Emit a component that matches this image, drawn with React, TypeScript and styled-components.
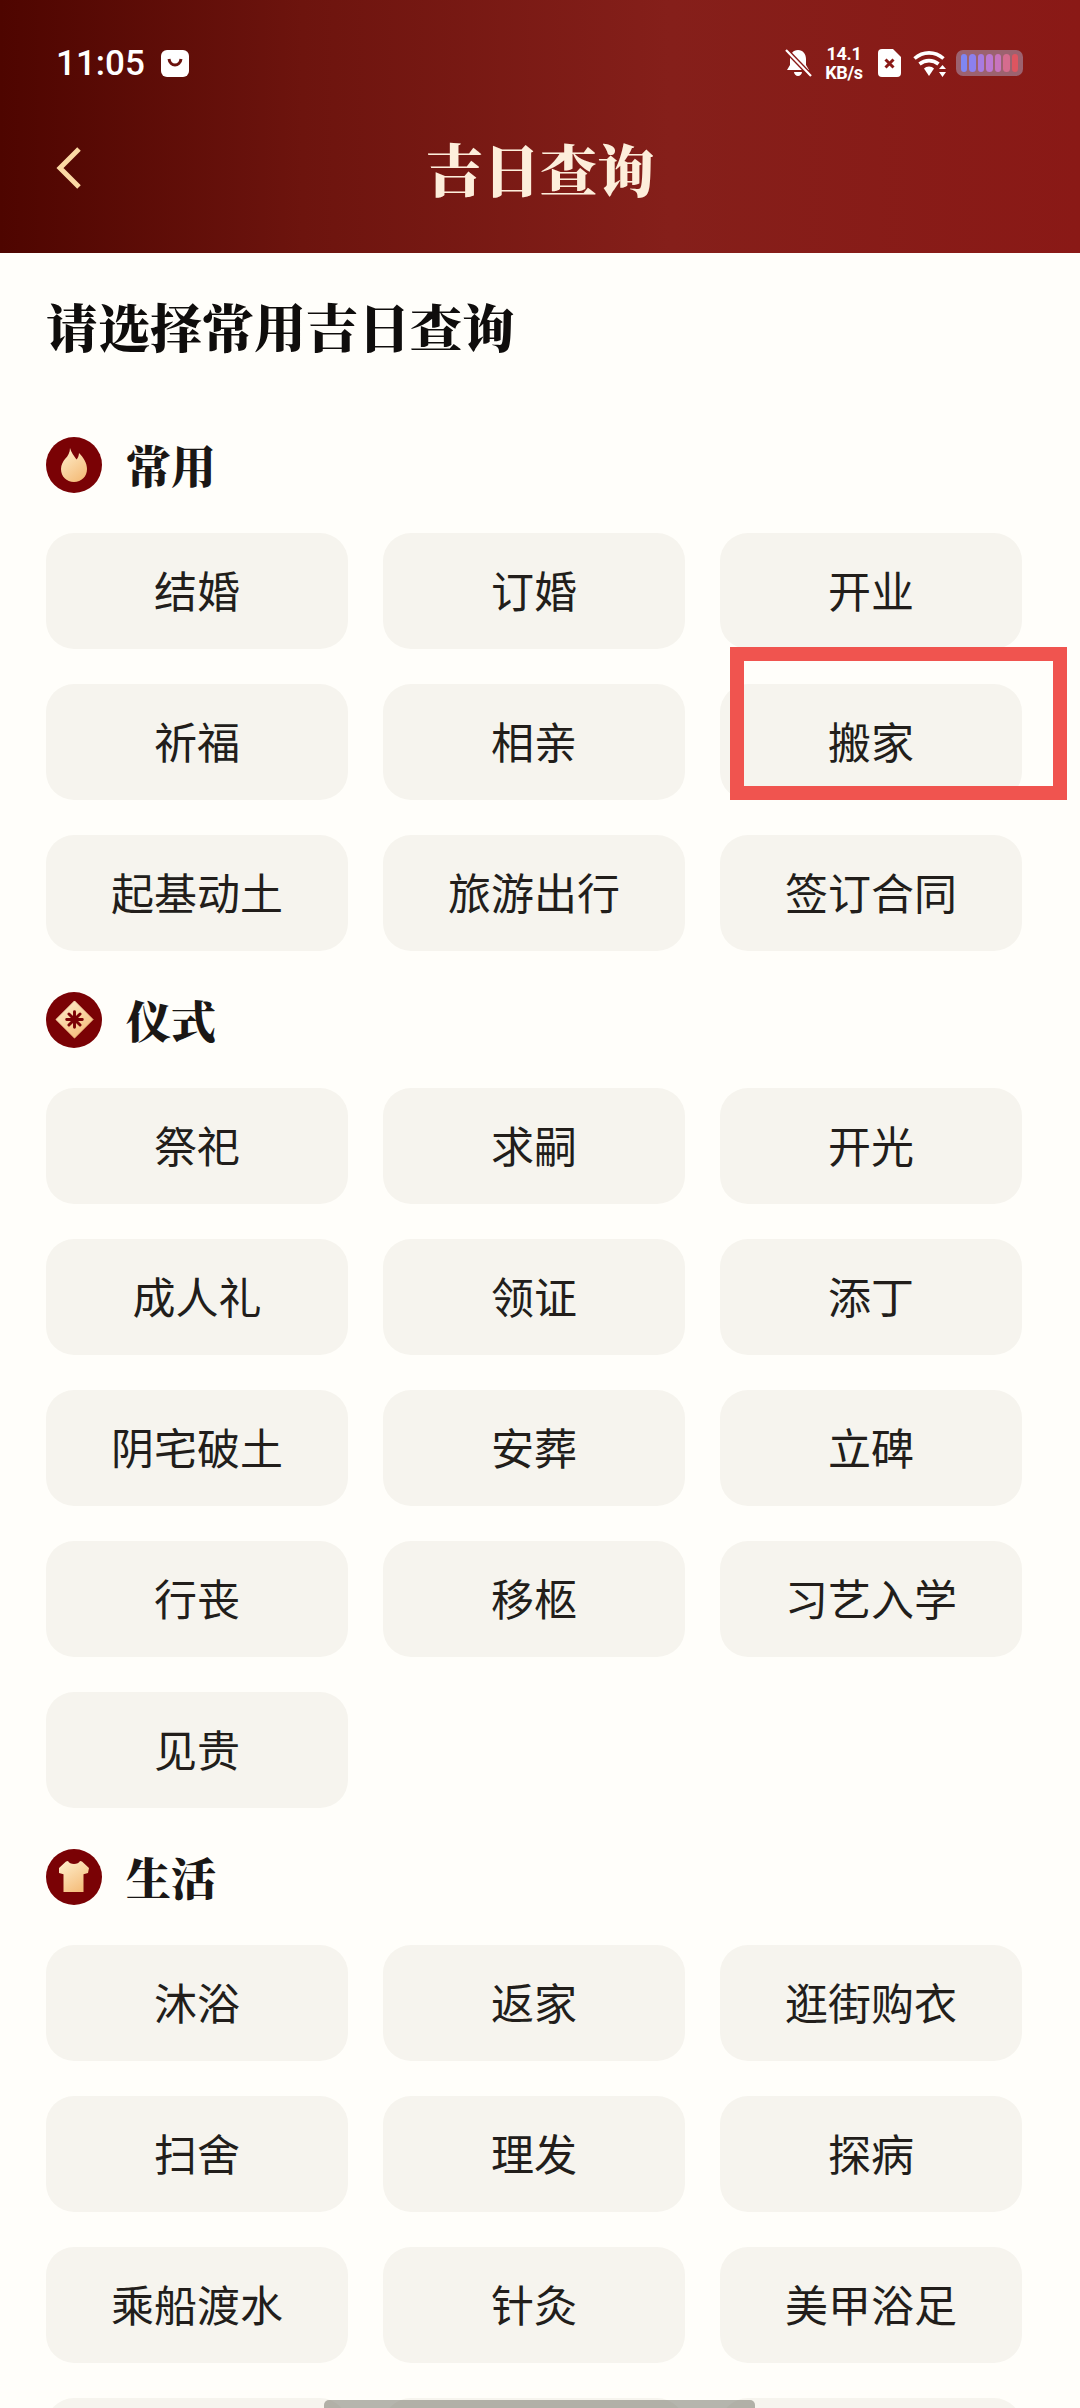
import * as React from "react";
import styled, { createGlobalStyle } from "styled-components";

const GlobalStyle = createGlobalStyle`
    html, body {
        margin: 0;
        padding: 0;
        background: #fffefa;
    }
    * {
        box-sizing: border-box;
    }
`;

const SERIF = `"Noto Serif CJK SC", "Noto Sans CJK SC", serif`;
const SANS = `"Noto Sans CJK SC", "Noto Sans", sans-serif`;

const Page = styled.div`
    position: relative;
    width: 1080px;
    height: 2408px;
    overflow: hidden;
    background: #fffefa;
    font-family: ${SANS};
`;

const Header = styled.header`
    height: 253px;
    background: linear-gradient(90deg, #4e0500 0%, #6d140e 28%, #851f1a 62%, #8a1916 100%);
`;

const StatusBar = styled.div`
    height: 126px;
    padding: 36px 57px 0 56px;
    display: flex;
    justify-content: space-between;
    align-items: flex-start;
    color: #ffffff;
`;

const StatusLeft = styled.div`
    display: flex;
    align-items: center;
    height: 54px;
    gap: 16px;
`;

const Time = styled.span`
    font-family: Roboto, sans-serif;
    font-weight: 500;
    font-size: 35px;
`;

const StatusRight = styled.div`
    display: flex;
    align-items: center;
    height: 54px;
`;

const Speed = styled.div`
    width: 42px;
    margin: 0 13px 0 11px;
    display: flex;
    flex-direction: column;
    align-items: center;
    font-family: Roboto, sans-serif;
    font-weight: 700;
    font-size: 18px;
    line-height: 19px;
    letter-spacing: -0.3px;
`;

const WifiSlot = styled.span`
    display: flex;
    margin-left: 12px;
`;

const Battery = styled.div`
    width: 67px;
    height: 26px;
    margin-left: 9px;
    padding: 4px 5px;
    border-radius: 7px;
    background: rgba(175, 170, 200, 0.5);
    display: flex;
    gap: 2px;
`;

const Cell = styled.span<{ $color: string }>`
    flex: 1;
    border-radius: 4px;
    background: ${(p) => p.$color};
`;

const NavBar = styled.div`
    position: relative;
    height: 84px;
    display: flex;
    align-items: center;
    justify-content: center;
`;

const BackIcon = styled.svg`
    position: absolute;
    left: 55px;
    top: 20px;
`;

const NavTitle = styled.h1`
    margin: -3px 0 0 0;
    font-family: ${SERIF};
    font-weight: 900;
    font-size: 57px;
    line-height: 84px;
    color: #fdeedb;
`;

const Content = styled.main`
    padding: 46px 58px 0 46px;
`;

const PageTitle = styled.h2`
    margin: 0 0 84px 0;
    font-family: ${SERIF};
    font-weight: 900;
    font-size: 52px;
    line-height: 54px;
    color: #0f0d0c;
`;

const Section = styled.section`
    margin-bottom: 41px;
`;

const SectionHead = styled.div`
    display: flex;
    align-items: center;
    gap: 24px;
    height: 55px;
    margin-bottom: 41px;
`;

const Badge = styled.span`
    width: 56px;
    height: 56px;
    border-radius: 50%;
    background: #7a0205;
    display: flex;
    align-items: center;
    justify-content: center;
`;

const SectionName = styled.h3`
    margin: 0;
    font-family: ${SERIF};
    font-weight: 900;
    font-size: 45px;
    line-height: 55px;
    color: #1a1715;
`;

const Grid = styled.div`
    display: grid;
    grid-template-columns: repeat(3, 302px);
    grid-auto-rows: 116px;
    gap: 35px;
`;

const Chip = styled.button`
    border: 0;
    padding: 0 0 4px 0;
    border-radius: 28px;
    background: #f6f4ee;
    font-family: ${SANS};
    font-weight: 400;
    font-size: 43px;
    color: #221e1b;
`;

const Highlight = styled.div`
    position: absolute;
    left: 730px;
    top: 647px;
    width: 337px;
    height: 153px;
    border: 14px solid #f0544f;
`;

const HomeBar = styled.div`
    position: absolute;
    left: 324px;
    bottom: 0;
    width: 431px;
    height: 8px;
    border-radius: 5px 5px 0 0;
    background: rgba(120, 120, 110, 0.55);
`;

function BadgeGradient({ id }: { id: string }) {
    return (
        <defs>
            <linearGradient id={id} x1="0" y1="0" x2="0.6" y2="1">
                <stop offset="0" stopColor="#fff0cf" />
                <stop offset="1" stopColor="#f5bf7e" />
            </linearGradient>
        </defs>
    );
}

const FlameIcon = () => (
    <svg width="26" height="34" viewBox="0 0 26 34">
        <BadgeGradient id="flame" />
        <path
            d="M9 0C10 4 13 8 15.500 11.500 17 10 17.800 8 18 5 22.500 9.500 26 15 26 21c0 7.500-5.500 13-13 13S0 28.500 0 21c0-4 2-7.500 4-10C7 8 9 4.500 9 0z"
            fill="url(#flame)"
        />
    </svg>
);

const DiamondIcon = () => (
    <svg width="39" height="39" viewBox="0 0 40 40">
        <BadgeGradient id="diamond" />
        <path d="M20 1 39 20 20 39 1 20z" fill="url(#diamond)" stroke="url(#diamond)" strokeLinejoin="round" />
        <g stroke="#7a0205" strokeWidth="3" strokeLinecap="round">
            <path d="M20 12v16M12 20h16M14.300 14.300l11.400 11.400M25.700 14.300 14.300 25.700" />
        </g>
    </svg>
);

const ShirtIcon = () => (
    <svg width="30" height="31" viewBox="0 0 30 31">
        <BadgeGradient id="shirt" />
        <path
            d="M9 0c1.500 4 10.500 4 12 0l2 .4 7 6.600-1 5-4.500 1.200V31H4.500V13.200L0 12 0 7 7 .4z"
            fill="url(#shirt)"
        />
    </svg>
);

const BellOff = () => (
    <svg width="27" height="28" viewBox="0 0 27 28" fill="#fff">
        <path d="M13 1c5 0 8 4 8 9v6l3 5H2l3-5v-6c0-5 3-9 8-9zM9 23h8c0 2-2 4-4 4s-4-2-4-4z" />
        <path d="M1 1 26 27" stroke="#8a1916" strokeWidth="5" />
        <path d="M1 1 26 27" stroke="#fff" strokeWidth="2.200" />
    </svg>
);

const SimIcon = () => (
    <svg width="23" height="28" viewBox="0 0 23 28">
        <path d="M4 0h11l8 8v16a4 4 0 0 1-4 4H4a4 4 0 0 1-4-4V4a4 4 0 0 1 4-4z" fill="#fff" />
        <path d="M7.500 10.500l8 8M15.500 10.500l-8 8" stroke="#8a1916" strokeWidth="3" />
    </svg>
);

const WifiIcon = () => (
    <svg width="34" height="27" viewBox="0 0 34 27" fill="none">
        <path d="M1.500 8.500C10 1 22 1 30.500 8.500" stroke="#fff" strokeWidth="3.600" />
        <path d="M6.500 14c5.500-4.500 13.500-4.500 19 0" stroke="#fff" strokeWidth="3.600" />
        <path d="M16 16.500c-2 0-3.800.8-5 2l5 7.500 5-7.500c-1.200-1.200-3-2-5-2z" fill="#fff" />
        <path d="M29.500 15l3.500 4h-7zM29.500 27l3.500-5h-7z" fill="#fff" />
    </svg>
);

const CELLS = ["#7f86f2", "#8c80ee", "#a87be0", "#bd78d2", "#c874be", "#d56c8e", "#dd5560"];

interface GroupData {
    name: string;
    icon: React.ReactNode;
    items: string[];
}

const GROUPS: GroupData[] = [
    {
        name: "常用",
        icon: <FlameIcon />,
        items: ["结婚", "订婚", "开业", "祈福", "相亲", "搬家", "起基动土", "旅游出行", "签订合同"],
    },
    {
        name: "仪式",
        icon: <DiamondIcon />,
        items: ["祭祀", "求嗣", "开光", "成人礼", "领证", "添丁", "阴宅破土", "安葬", "立碑", "行丧", "移柩", "习艺入学", "见贵"],
    },
    {
        name: "生活",
        icon: <ShirtIcon />,
        items: ["沐浴", "返家", "逛街购衣", "扫舍", "理发", "探病", "乘船渡水", "针灸", "美甲浴足", "", "", ""],
    },
];

export default function App() {
    return (
        <Page>
            <GlobalStyle />
            <Header>
                <StatusBar>
                    <StatusLeft>
                        <Time>11:05</Time>
                        <svg width="28" height="27" viewBox="0 0 28 27">
                            <rect width="28" height="27" rx="6" fill="#fff" />
                            <path d="M8 9c1 8 11 8 12 0" fill="none" stroke="#6a120d" strokeWidth="3" />
                        </svg>
                    </StatusLeft>
                    <StatusRight>
                        <BellOff />
                        <Speed>
                            <span>14.1</span>
                            <span>KB/s</span>
                        </Speed>
                        <SimIcon />
                        <WifiSlot>
                            <WifiIcon />
                        </WifiSlot>
                        <Battery>
                            {CELLS.map((c) => (
                                <Cell key={c} $color={c} />
                            ))}
                        </Battery>
                    </StatusRight>
                </StatusBar>
                <NavBar>
                    <BackIcon width="28" height="44" viewBox="0 0 28 44" fill="none">
                        <path d="M24 3 5 22l19 19" stroke="#fbd9a4" strokeWidth="5" />
                    </BackIcon>
                    <NavTitle>吉日查询</NavTitle>
                </NavBar>
            </Header>
            <Content>
                <PageTitle>请选择常用吉日查询</PageTitle>
                {GROUPS.map((group) => (
                    <Section key={group.name}>
                        <SectionHead>
                            <Badge>{group.icon}</Badge>
                            <SectionName>{group.name}</SectionName>
                        </SectionHead>
                        <Grid>
                            {group.items.map((item, i) => (
                                <Chip key={i}>{item}</Chip>
                            ))}
                        </Grid>
                    </Section>
                ))}
            </Content>
            <Highlight />
            <HomeBar />
        </Page>
    );
}
